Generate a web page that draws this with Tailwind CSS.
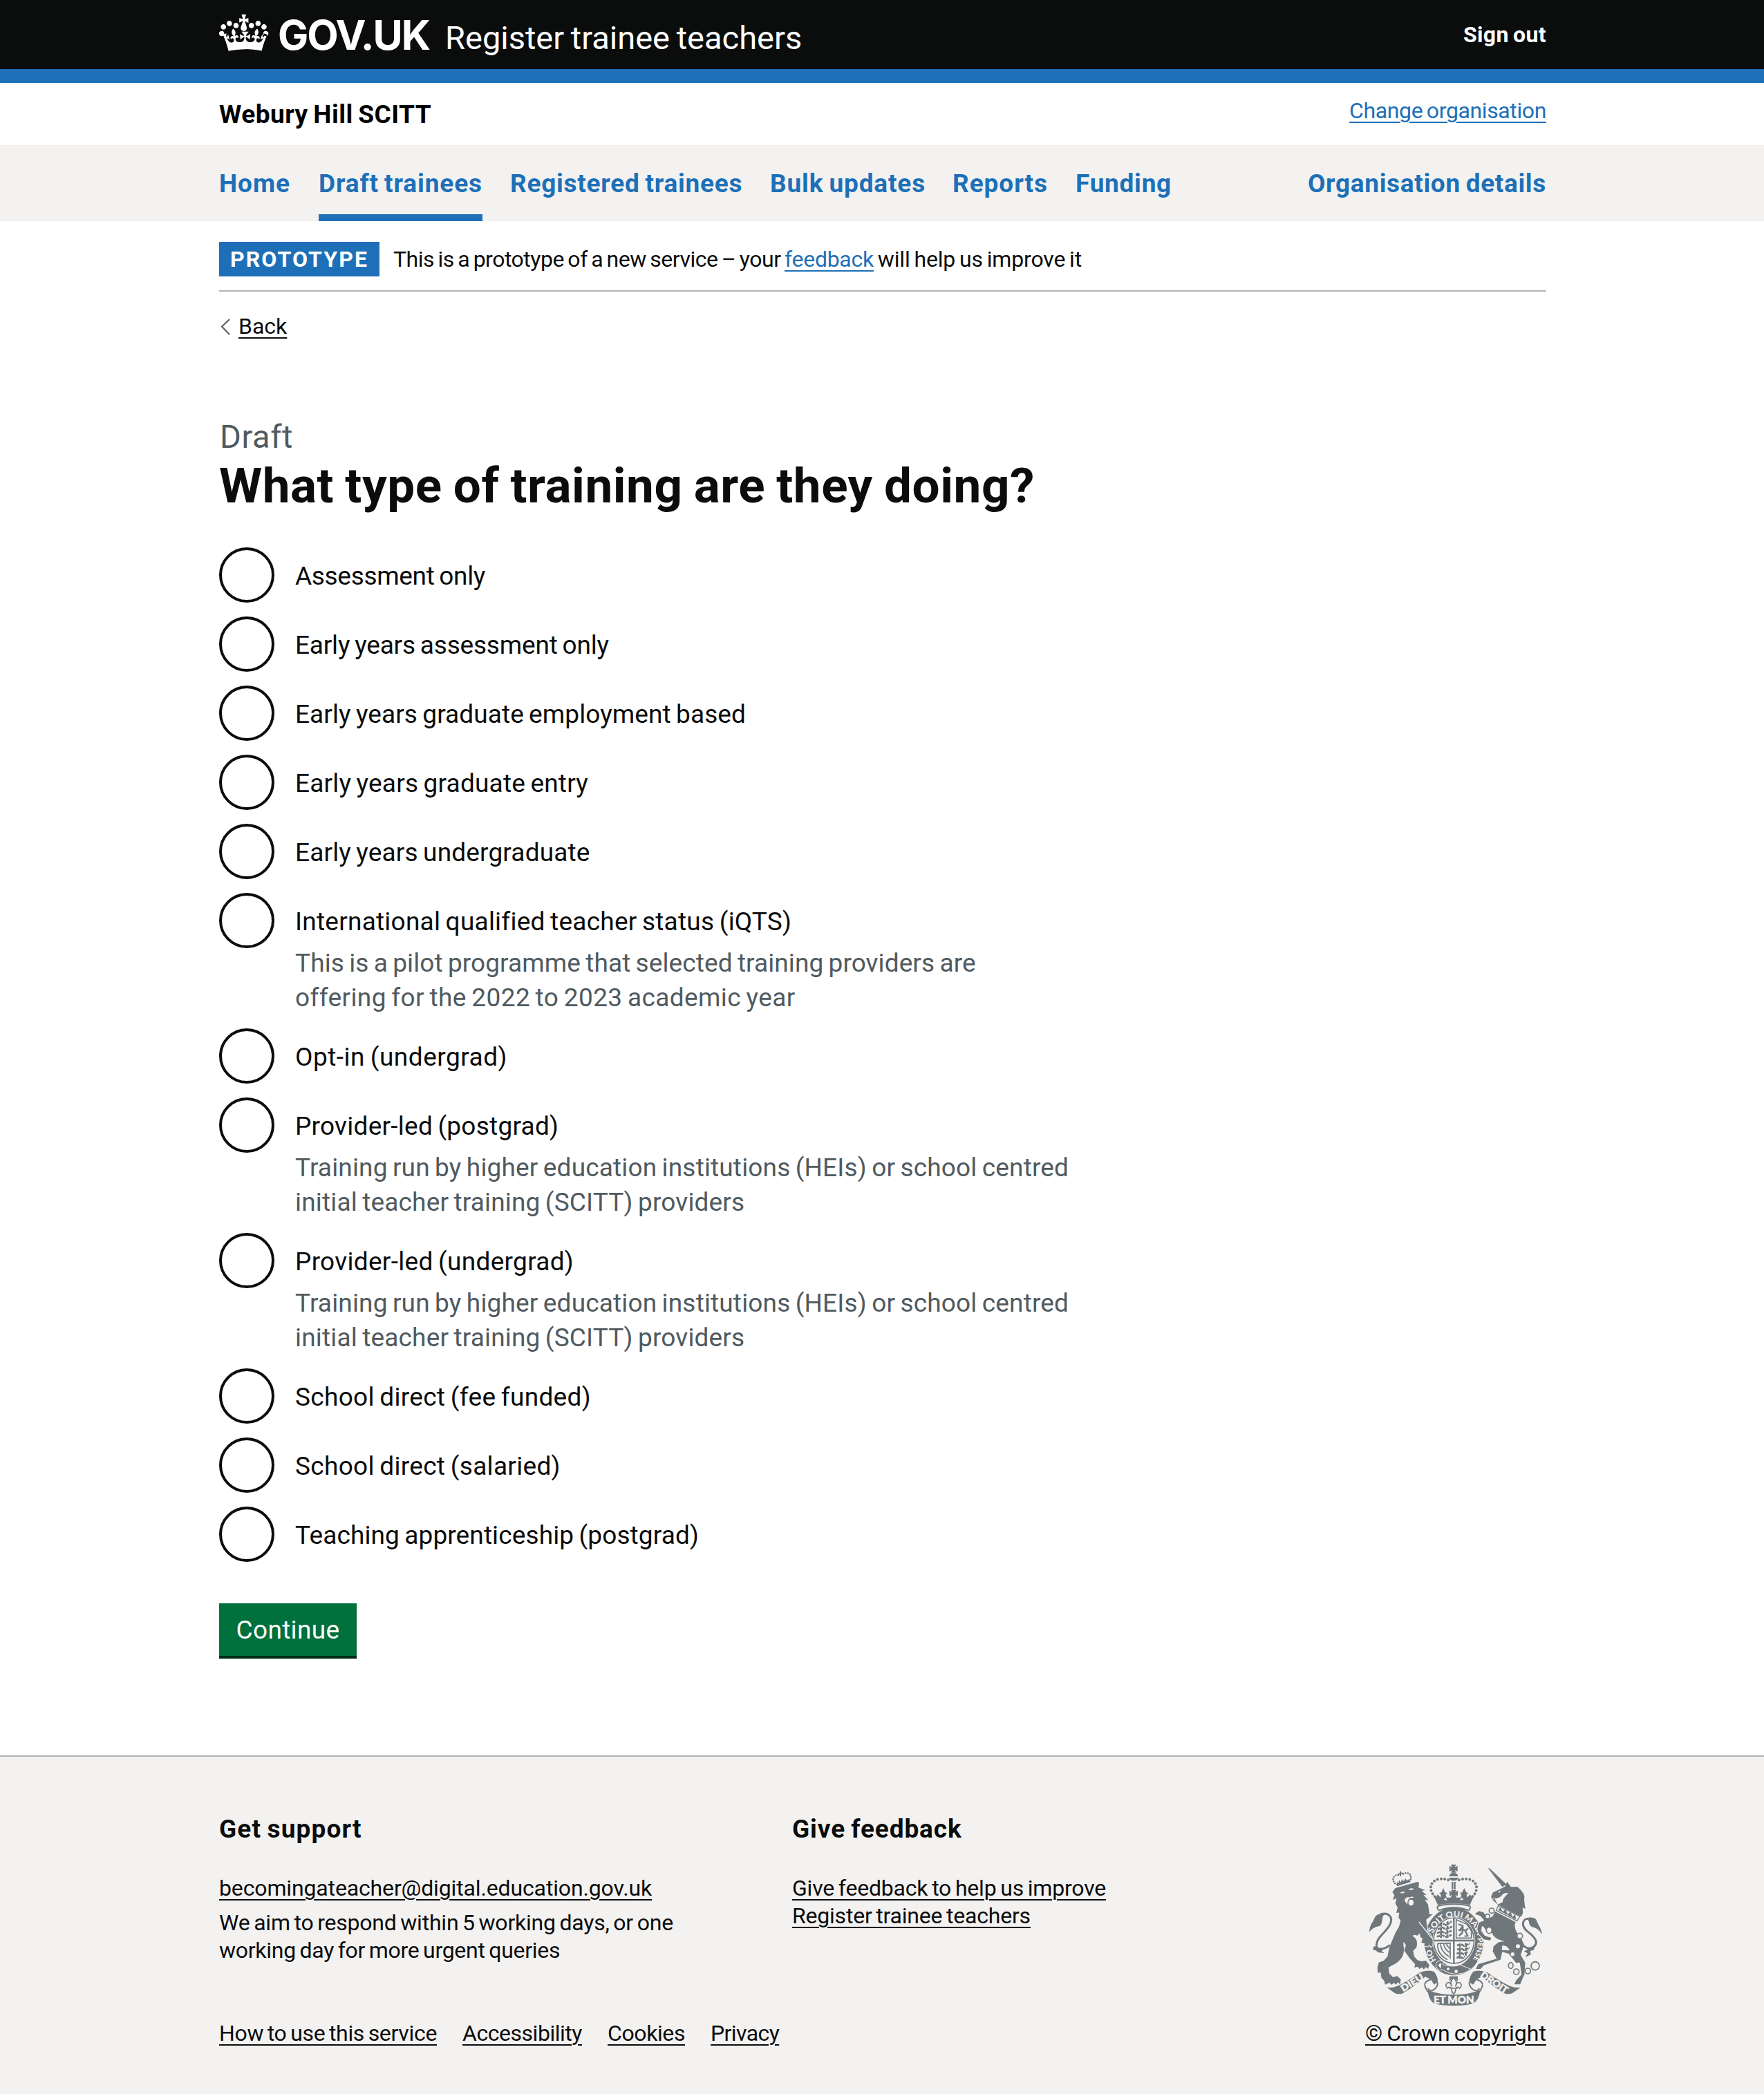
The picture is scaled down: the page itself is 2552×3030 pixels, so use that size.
<!DOCTYPE html>
<html lang="en">
<head>
<meta charset="utf-8">
<title>What type of training are they doing? - Register trainee teachers</title>
<script src="https://cdn.jsdelivr.net/npm/@tailwindcss/browser@4"></script>
</head>
<body class="bg-white text-[#0b0c0c] font-['Roboto',sans-serif] [word-spacing:-2px]">
<header class="bg-[#0b0c0c] text-white h-[120px] border-b-[20px] border-[#1d70b8]">
  <div class="w-[1920px] ml-[317px] h-[100px] flex items-start">
    <svg class="w-[74px] h-[54px] mt-[21px]" viewBox="0 4 37 27" fill="#fff"><path d="M6.7 12.2c1 .4 2.1-.1 2.5-1s-.1-2.1-1-2.5c-1-.4-2.1.1-2.5 1-.4 1 0 2.1 1 2.5m-4.3 2.5c1 .4 2.1-.1 2.5-1s-.1-2.1-1-2.5c-1-.4-2.1.1-2.5 1-.5 1 0 2.1 1 2.5m-1.3 4.8c1 .4 2.1-.1 2.5-1 .4-1-.1-2.1-1-2.5-1-.4-2.1.1-2.5 1-.4 1 0 2.1 1 2.5m10.4-5.8c1 .4 2.1-.1 2.5-1s-.1-2.1-1-2.5c-1-.4-2.1.1-2.5 1s0 2.1 1 2.5m17.4-1.5c-1 .4-2.1-.1-2.5-1s.1-2.1 1-2.5c1-.4 2.1.1 2.5 1 .5 1 0 2.1-1 2.5m4.3 2.5c-1 .4-2.1-.1-2.5-1s.1-2.1 1-2.5c1-.4 2.1.1 2.5 1 .5 1 0 2.1-1 2.5m1.3 4.8c-1 .4-2.1-.1-2.5-1-.4-1 .1-2.1 1-2.5 1-.4 2.1.1 2.5 1 .4 1 0 2.1-1 2.5m-10.4-5.8c-1 .4-2.1-.1-2.5-1s.1-2.1 1-2.5c1-.4 2.1.1 2.5 1s0 2.1-1 2.5m-5.3-4.9 2.4 1.3V6.5l-2.4.8c-.1-.1-.1-.2-.2-.3s1-3 1-3h-3.4s1 2.9 1 3c-.1.1-.2.2-.2.3l-2.4-.8v3.4l2.4-1.3c.1.1.1.2.2.3 0 0-1.4 4.100-1.500 4.300 0 .2-.1.4-.1.6 0 1.100.8 2 1.900 2.200h.7c1.100-.2 1.900-1.100 1.900-2.100 0-.2 0-.4-.1-.6 0 0-1.100-4-1.400-4.400.1-.1.2-.1.3-.2m-.8 20.300c4.800 0 9.200.5 12.700 1.300 1.100-4.600 2.400-8 4-11.800l-2.600-.9c.4 1.300.4 2 0 3-.4-.4-.8-1.100-1.100-2.400l-1.200 4c.8-.5 1.500-.9 2-.9-1.100 2.500-2.600 3.100-3.500 3-1.100-.2-1.700-1.200-1.500-2.100.3-1.200 1.500-1.500 2.100-.1 1.100-2.300-.8-3-2.100-2.300 1.900-1.900 2.100-3.500.6-5.600-2.100 1.600-2.100 3.200-1.200 5.500-1.200-1.400-3.200-.6-2.500 1.600.9-1.400 2.100-.5 1.900.8-.2 1.100-1.700 2.100-3.500 1.900-2.700-.2-2.900-2.100-2.900-3.600.7-.1 1.900.5 2.900 1.900l.4-4.300c-1.100 1.100-2.100 1.400-3.200 1.400.4-1.200 2.100-3 2.100-3h-5.400s1.700 1.900 2.100 3c-1.100 0-2.100-.2-3.200-1.400l.4 4.300c1-1.400 2.200-2 2.900-1.900-.1 1.500-.2 3.400-2.900 3.600-1.900.2-3.400-.8-3.500-1.900-.2-1.300 1-2.200 1.900-.8.7-2.300-1.200-3-2.500-1.600.9-2.200.9-3.900-1.200-5.500-1.500 2-1.300 3.700.6 5.600-1.200-.7-3.200 0-2.100 2.300.6-1.400 1.800-1.100 2.100.1.2.9-.3 1.900-1.500 2.100-.9.2-2.400-.5-3.500-3 .6 0 1.200.3 2 .9l-1.200-4c-.3 1.100-.7 1.900-1.100 2.300-.3-.9-.4-1.700 0-2.900l-2.600.9c1.600 3.900 2.900 7.300 4 11.900 3.500-.8 7.900-1.300 12.700-1.300"/></svg>
    <span class="ml-[11px] mt-[11px] w-[220px] whitespace-nowrap text-[59px] leading-[80px] font-bold font-['Inter',sans-serif] tracking-[-2px]">GOV.UK</span>
    <span class="ml-[22px] mt-[19px] text-[47px] leading-[72px]">Register trainee teachers</span>
    <a class="ml-auto mt-[30px] text-[32px] leading-[40px] font-bold tracking-[0.36px]">Sign out</a>
  </div>
</header>
<div class="w-[1920px] ml-[317px] h-[90px] flex justify-between items-start">
  <span class="mt-[21px] text-[37px] leading-[50px] font-bold text-black tracking-[0.47px]">Webury Hill SCITT</span>
  <a class="mt-[20px] text-[32px] leading-[40px] text-[#1d70b8] underline decoration-2 underline-offset-[5px] tracking-[-0.38px]">Change organisation</a>
</div>
<nav class="bg-[#f3f2f1]">
  <div class="w-[1920px] ml-[317px] h-[110px] flex gap-[40px] text-[37px] leading-[50px] font-bold text-[#1d70b8]">
    <a class="pt-[31px] w-[104px] tracking-[0.99px]">Home</a>
    <a class="pt-[31px] w-[237px] border-b-[10px] border-[#1d70b8] tracking-[0.89px] whitespace-nowrap">Draft trainees</a>
    <a class="pt-[31px] w-[336px] tracking-[0.74px] whitespace-nowrap">Registered trainees</a>
    <a class="pt-[31px] w-[224px] tracking-[0.86px] whitespace-nowrap">Bulk updates</a>
    <a class="pt-[31px] w-[138px] tracking-[0.95px]">Reports</a>
    <a class="pt-[31px] w-[139px] tracking-[0.73px]">Funding</a>
    <a class="pt-[31px] ml-auto tracking-[0.66px]">Organisation details</a>
  </div>
</nav>
<main class="w-[1920px] ml-[317px] h-[2220px]">
  <div class="h-[102px] pt-[30px] border-b-2 border-[#b1b4b6] flex items-start">
    <strong class="bg-[#1d70b8] text-white w-[232px] h-[50px] pl-[16px] text-[32px] leading-[51px] tracking-[2.1px]">PROTOTYPE</strong>
    <p class="ml-[20px] text-[32px] leading-[50px] tracking-[-0.14px] whitespace-pre"><span class="tracking-[-0.49px]">This is a prototype of a new service – your </span><a class="text-[#1d70b8] underline decoration-2 underline-offset-[5px] tracking-[-0.26px]">feedback</a> will help us improve it</p>
  </div>
  <a class="mt-[30px] flex items-start text-[32px] leading-[40px]">
    <svg class="w-[14px] h-[24px] mt-[9px] ml-[2px]" viewBox="0 0 14 24" fill="none" stroke="#505a5f" stroke-width="2"><path d="M13 1 2 11.500 13 23"/></svg>
    <span class="ml-[12px] underline decoration-2 underline-offset-[5px]">Back</span>
  </a>
  <h1 class="mt-[110px]">
    <span class="block text-[47px] leading-[60px] text-[#505a5f] pl-px tracking-[0.57px]">Draft</span>
    <span class="block text-[71px] leading-[82px] font-bold tracking-[0.55px]">What type of training are they doing?</span>
  </h1>
  <form class="mt-[48px] text-[37px] leading-[50px]">
    <div class="grid gap-[20px]">
      <label class="flex h-[80px]"><i class="size-[80px] rounded-full border-4 border-[#0b0c0c]"></i><span class="ml-[30px] mt-[17px] tracking-[-0.33px]">Assessment only</span></label>
      <label class="flex h-[80px]"><i class="size-[80px] rounded-full border-4 border-[#0b0c0c]"></i><span class="ml-[30px] mt-[17px] tracking-[-0.2px]">Early years assessment only</span></label>
      <label class="flex h-[80px]"><i class="size-[80px] rounded-full border-4 border-[#0b0c0c]"></i><span class="ml-[30px] mt-[17px] tracking-[0.09px]">Early years graduate employment based</span></label>
      <label class="flex h-[80px]"><i class="size-[80px] rounded-full border-4 border-[#0b0c0c]"></i><span class="ml-[30px] mt-[17px] tracking-[0.2px]">Early years graduate entry</span></label>
      <label class="flex h-[80px]"><i class="size-[80px] rounded-full border-4 border-[#0b0c0c]"></i><span class="ml-[30px] mt-[17px] tracking-[0.16px]">Early years undergraduate</span></label>
      <label class="flex h-[176px]"><i class="size-[80px] rounded-full border-4 border-[#0b0c0c]"></i><div class="ml-[30px] mt-[17px]"><p class="tracking-[0.24px]">International qualified teacher status (iQTS)</p><p class="mt-[10px] text-[#505a5f]"><span class="tracking-[0.09px]">This is a pilot programme that selected training providers are</span><br><span class="tracking-[0.38px]">offering for the 2022 to 2023 academic year</span></p></div></label>
      <label class="flex h-[80px]"><i class="size-[80px] rounded-full border-4 border-[#0b0c0c]"></i><span class="ml-[30px] mt-[17px] tracking-[0.51px]">Opt-in (undergrad)</span></label>
      <label class="flex h-[176px]"><i class="size-[80px] rounded-full border-4 border-[#0b0c0c]"></i><div class="ml-[30px] mt-[17px]"><p class="tracking-[0.25px]">Provider-led (postgrad)</p><p class="mt-[10px] text-[#505a5f]"><span class="tracking-[0.16px]">Training run by higher education institutions (HEIs) or school centred</span><br><span class="tracking-[0.17px]">initial teacher training (SCITT) providers</span></p></div></label>
      <label class="flex h-[176px]"><i class="size-[80px] rounded-full border-4 border-[#0b0c0c]"></i><div class="ml-[30px] mt-[17px]"><p class="tracking-[0.3px]">Provider-led (undergrad)</p><p class="mt-[10px] text-[#505a5f]"><span class="tracking-[0.16px]">Training run by higher education institutions (HEIs) or school centred</span><br><span class="tracking-[0.17px]">initial teacher training (SCITT) providers</span></p></div></label>
      <label class="flex h-[80px]"><i class="size-[80px] rounded-full border-4 border-[#0b0c0c]"></i><span class="ml-[30px] mt-[17px] tracking-[0.31px]">School direct (fee funded)</span></label>
      <label class="flex h-[80px]"><i class="size-[80px] rounded-full border-4 border-[#0b0c0c]"></i><span class="ml-[30px] mt-[17px] tracking-[0.31px]">School direct (salaried)</span></label>
      <label class="flex h-[80px]"><i class="size-[80px] rounded-full border-4 border-[#0b0c0c]"></i><span class="ml-[30px] mt-[17px] tracking-[0.12px]">Teaching apprenticeship (postgrad)</span></label>
    </div>
    <button class="block mt-[60px] w-[199px] h-[80px] bg-[#00703c] border-b-4 border-[#002d18] text-white leading-[78px] tracking-[0.35px]">Continue</button>
  </form>
</main>
<footer class="bg-[#f3f2f1] border-t-2 border-[#b1b4b6] h-[490px]">
  <div class="w-[1920px] ml-[317px] pt-[81px] text-[32px] leading-[40px]">
    <div class="flex h-[299px]">
      <section class="w-[829px]">
        <h2 class="text-[37px] leading-[48px] font-bold tracking-[1.15px]">Get support</h2>
        <p class="mt-[41px]"><a class="underline decoration-2 underline-offset-[5px] tracking-[-0.14px]">becomingateacher@digital.education.gov.uk</a></p>
        <p class="mt-[10px] tracking-[-0.22px]">We aim to respond within 5 working days, or one<br><span class="tracking-[-0.28px]">working day for more urgent queries</span></p>
      </section>
      <section>
        <h2 class="text-[37px] leading-[48px] font-bold tracking-[0.9px]">Give feedback</h2>
        <p class="mt-[41px]"><a class="underline decoration-2 underline-offset-[5px] tracking-[-0.19px]">Give feedback to help us improve<br><span class="tracking-[-0.21px]">Register trainee teachers</span></a></p>
      </section>
      <svg class="w-[252px] h-[206px] ml-auto mr-[5px] mt-[74px]" viewBox="60 50 756 618" fill="#6f777b" font-family="Lato, sans-serif" font-weight="900">
        <!-- garter and shield -->
        <g>
          <ellipse cx="430" cy="387" rx="108" ry="127" fill="none" stroke="#6f777b" stroke-width="40"/>
          <ellipse cx="430" cy="383" rx="93" ry="104" fill="#f3f2f1"/>
          <ellipse cx="430" cy="383" rx="88" ry="99" fill="none" stroke="#6f777b" stroke-width="5"/>
          <path d="M430 282V484M342 383H518" stroke="#6f777b" stroke-width="7"/>
          <path d="M364 318 384 310 396 316 420 300M360 334 380 326 396 334 422 322M356 350 378 344 394 352 420 340M356 366 378 360 398 368 420 358M374 306V372M402 300V370M444 404 460 398 474 406 500 396M444 422 460 416 474 424 498 414M442 440 458 434 472 442 490 432M442 458 456 452 468 460 478 452M456 396V462M482 394V452" fill="none" stroke="#6f777b" stroke-width="8" stroke-dasharray="16 3"/>
          <path d="M440 292 486 312 506 340V372H440Z" fill="none" stroke="#6f777b" stroke-width="5"/>
          <path d="M450 312 468 318 460 332 480 340 492 330M470 322 466 350 452 362M480 342 490 362 476 364M450 336 462 340" fill="none" stroke="#6f777b" stroke-width="7"/>
          <path d="M360 398Q356 440 402 466M358 396 414 394V462M372 396Q372 430 408 452M386 396Q388 420 410 434M398 396Q400 408 412 416" fill="none" stroke="#6f777b" stroke-width="5"/>
          <path id="g1" d="M338 352A103 114 0 0 1 526 342" fill="none"/>
          <path id="g2" d="M527 348A101 122 0 0 1 478 499" fill="none"/>
          <path id="g3" d="M354 468A101 119 0 0 1 329 375" fill="none"/>
          <g fill="#f3f2f1" font-size="34">
            <text textLength="250" lengthAdjust="spacingAndGlyphs"><textPath href="#g1">SOIT QUI MAL</textPath></text>
            <text font-size="31"><textPath href="#g2">Y PENSE</textPath></text>
            <text font-size="34"><textPath href="#g3">HO</textPath></text>
          </g>
          <path d="M352 494Q350 470 374 470 390 474 382 488 434 500 456 488L506 508Q440 550 378 508 362 520 352 494Z" stroke="#f3f2f1" stroke-width="3"/>
          <circle cx="405" cy="506" r="6" fill="#f3f2f1"/><circle cx="440" cy="517" r="7" fill="#f3f2f1"/><path d="M362 492q6-16 14-8l-2 20Z" fill="#f3f2f1"/>
        </g>
        <!-- lion -->
        <g>
          <path d="M184 140C166 134 160 112 174 102 182 96 190 98 196 102M238 126C248 112 244 92 228 90 220 88 212 92 206 98" fill="none" stroke="#6f777b" stroke-width="8" stroke-linecap="round" stroke-dasharray="0 10.500"/>
          <path d="M182 128 190 134 192 120 200 130 205 116 212 126 220 114 226 122 237 116 240 129 184 147Z"/>
          <path d="M198 82v22M188 95l20-5" stroke="#6f777b" stroke-width="6"/>
          <path stroke="#f3f2f1" stroke-width="6" class="[paint-order:stroke]" d="M163 172 176 155 262 131 275 127 279 136 276 152 306 165 290 167 312 186 298 184 319 208 303 205 318 226 324 270 339 268 310 292 316 345 328 356 338 380 338 400 331 411 322 400 317 409 300 405 304 396 289 392 294 373 284 367 283 351 272 361 259 358 250 362C270 375 273 390 268 412L253 428 258 452 272 468 290 473 309 470 323 489 318 506 308 498 300 508 290 499 280 507 273 496 258 500 262 486 240 462 213 425C212 458 190 478 160 492L146 500 150 526 166 542 184 537 200 552 196 573 186 563 180 575 170 566 160 575 150 566 132 574 127 556 116 546 112 521 100 523 98 500 104 478 126 470 142 452 150 412 176 350 192 322 199 295 190 284 193 262 180 262 186 240 176 222 181 200 165 206 172 186Z"/>
          <path d="M210 388 222 402 214 428Z" fill="#f3f2f1"/>
          <ellipse cx="244" cy="218" rx="11" ry="13" fill="#f3f2f1"/>
          <path d="M196 176q12-10 22-2-10 6-22 2ZM232 162q12-10 24-4-8 10-24 4ZM216 206q10-16 22-10 12-10 18 2-20-4-24 8-6 14-2 22-10-8-14-22Z" fill="#f3f2f1"/>
          <path d="M278 302 334 372" stroke="#f3f2f1" stroke-width="4"/>
          <path d="M112 268C150 258 170 285 150 318 128 356 92 370 94 408 98 424 128 424 152 402" fill="none" stroke="#6f777b" stroke-width="9"/>
          <path d="M63 346C64 312 80 304 86 284 94 268 114 262 130 270 112 282 126 300 110 319 92 322 76 328 63 346ZM80 410 96 406 104 420 134 412 116 428 128 438 100 434 92 426 80 424Z"/>
        </g>
        <!-- unicorn -->
        <g>
          <path d="M578 68 586 70 659 139 640 150Z"/>
          <path d="M661 127 677 150 706 150C732 172 740 190 735 206L740 246 728 240 730 262 722 280 620 227 598 206 607 197 594 203 592 190 600 174 638 156 652 148Z"/>
          <path d="M606 200q24 0 36-18 14-10 24-4-26 22-24 38-10 6-22 10ZM622 168l12 2-8 6Z" fill="#f3f2f1"/>
          <path d="M622 232 716 278 704 298 614 252Z" fill="#f3f2f1" stroke="#6f777b" stroke-width="4"/>
          <path d="M622 250 632 238 642 258 654 246 664 270 676 256 684 280 696 268 700 292Z"/>
          <path stroke="#f3f2f1" stroke-width="6" class="[paint-order:stroke]" d="M608 256 698 303C688 322 700 348 720 368L735 402 720 445 740 480 736 530 718 573 692 573 700 556 724 530 716 478 700 480 668 440 640 432 632 466 560 490 546 506 525 506 536 485 560 478 616 462 599 430 602 408 624 390 652 386C618 380 600 366 596 350L574 344 558 322 552 320 548 340 564 362 592 371 588 382 560 378 536 352 532 330 538 306 562 295 545 276 521 268 538 255 558 260 580 290 600 276Z"/>
          <path d="M640 404q24 0 32 22l-34-2Z" fill="#f3f2f1"/>
          <g fill="#f3f2f1" stroke="#6f777b" stroke-width="5"><circle cx="594" cy="253" r="11"/><circle cx="576" cy="278" r="10"/><ellipse cx="583" cy="338" rx="12" ry="14"/><circle cx="716" cy="363" r="12"/><ellipse cx="677" cy="491" rx="10" ry="13"/><circle cx="701" cy="518" r="12"/><circle cx="751" cy="515" r="12"/><circle cx="783" cy="493" r="18"/></g>
          <circle cx="708" cy="408" r="9" fill="#f3f2f1"/><circle cx="685" cy="442" r="8" fill="#f3f2f1"/>
          <path d="M764 290C728 280 718 316 748 342 782 368 800 392 776 410 756 426 736 412 724 396" fill="none" stroke="#6f777b" stroke-width="9"/>
          <path d="M813 356C810 326 792 312 788 292 776 280 756 280 742 288 764 294 748 310 768 324 784 326 800 336 813 356ZM784 404 776 424 762 428 764 444 740 455 750 438 734 430 752 420Z"/>
        </g>
        <!-- crown -->
        <g>
          <path d="M417 53h23l-7 12 13-7v26l-13-8 7 12h-23l6-12-12 8V58l12 7ZM410 104c0-20 38-20 38 0ZM408 110h42c-6 18-36 18-42 0Z"/>
          <path d="M424 128v34M434 128v34" stroke="#6f777b" stroke-width="7"/>
          <path d="M347 192C318 160 326 124 366 116 388 114 402 116 414 124M511 192C540 160 532 124 492 116 470 114 456 116 444 124" fill="none" stroke="#6f777b" stroke-width="12" stroke-linecap="round" stroke-dasharray="0 15.500"/>
          <path d="M337 178 352 196 360 182 372 196 374 184 366 176 376 174 384 155 392 174 402 176 395 184 398 196 416 196 422 184 412 190 410 166 422 172 418 164H440L436 172 448 166 446 190 436 184 442 196 460 196 463 184 456 176 466 174 475 155 484 174 494 176 485 184 488 196 500 182 508 196 522 178 500 228Q430 216 360 228Z"/>
          <path d="M386 206l8-10 8 12ZM472 206l-8-10-8 12Z" fill="#f3f2f1"/>
          <path d="M362 232Q430 218 498 232 506 240 494 252 430 228 366 252 352 240 362 232Z" fill="#f3f2f1" stroke="#6f777b" stroke-width="6"/>
        </g>
        <!-- fleur-de-lis -->
        <path d="M411 538h36v24q-6-12-18-20-12 8-18 20Z"/>
        <path d="M429 544q20 20 8 38 4-20 20-16 12 12-2 24-8-10-16 0l-4 18-6 6-6-6-4-18q-8-10-16 0-14-12-2-24 16-4 20 16-12-18 8-38ZM412 590h34" fill="#f3f2f1" stroke="#6f777b" stroke-width="5"/>
        <!-- motto ribbon -->
        <path d="M138 586Q170 592 206 570 250 546 282 522 314 508 344 518 362 540 360 564L344 574 330 552 306 540Q250 590 204 614 178 618 164 604Z"/>
        <path d="M720 586Q688 592 652 570 608 546 576 522 544 508 514 518 496 540 496 564L514 574 528 552 552 540Q608 590 654 614 680 618 694 604Z"/>
        <path d="M330 552Q300 560 304 580 312 600 318 606M360 564Q360 590 336 600 322 602 318 590M528 552Q558 560 554 580 546 600 540 606M496 564Q498 590 522 600 538 602 540 590" fill="none" stroke="#6f777b" stroke-width="6"/>
        <path d="M316 598Q370 618 430 618 490 618 544 598 540 640 514 656 480 666 430 666 380 666 344 656 320 640 316 598Z"/>
        <g fill="#f3f2f1" stroke="#f3f2f1" stroke-width="1.500" font-size="40" text-anchor="middle">
          <text transform="translate(256 577) rotate(-32)" textLength="108" lengthAdjust="spacingAndGlyphs">DIEU</text>
          <text transform="translate(598 576) rotate(34)" textLength="136" lengthAdjust="spacingAndGlyphs">DROIT</text>
          <text x="430" y="656" textLength="176" font-size="46" lengthAdjust="spacingAndGlyphs">ET MON</text>
        </g>
      </svg>
    </div>
    <div class="flex">
      <a class="mr-[37px] underline decoration-2 underline-offset-[5px] tracking-[-0.32px]">How to use this service</a>
      <a class="mr-[37px] underline decoration-2 underline-offset-[5px] tracking-[-0.47px]">Accessibility</a>
      <a class="mr-[37px] underline decoration-2 underline-offset-[5px] tracking-[-0.4px]">Cookies</a>
      <a class="underline decoration-2 underline-offset-[5px] tracking-[-0.6px]">Privacy</a>
      <a class="ml-auto underline decoration-2 underline-offset-[5px] tracking-[0.06px]">© Crown copyright</a>
    </div>
  </div>
</footer>
</body>
</html>
